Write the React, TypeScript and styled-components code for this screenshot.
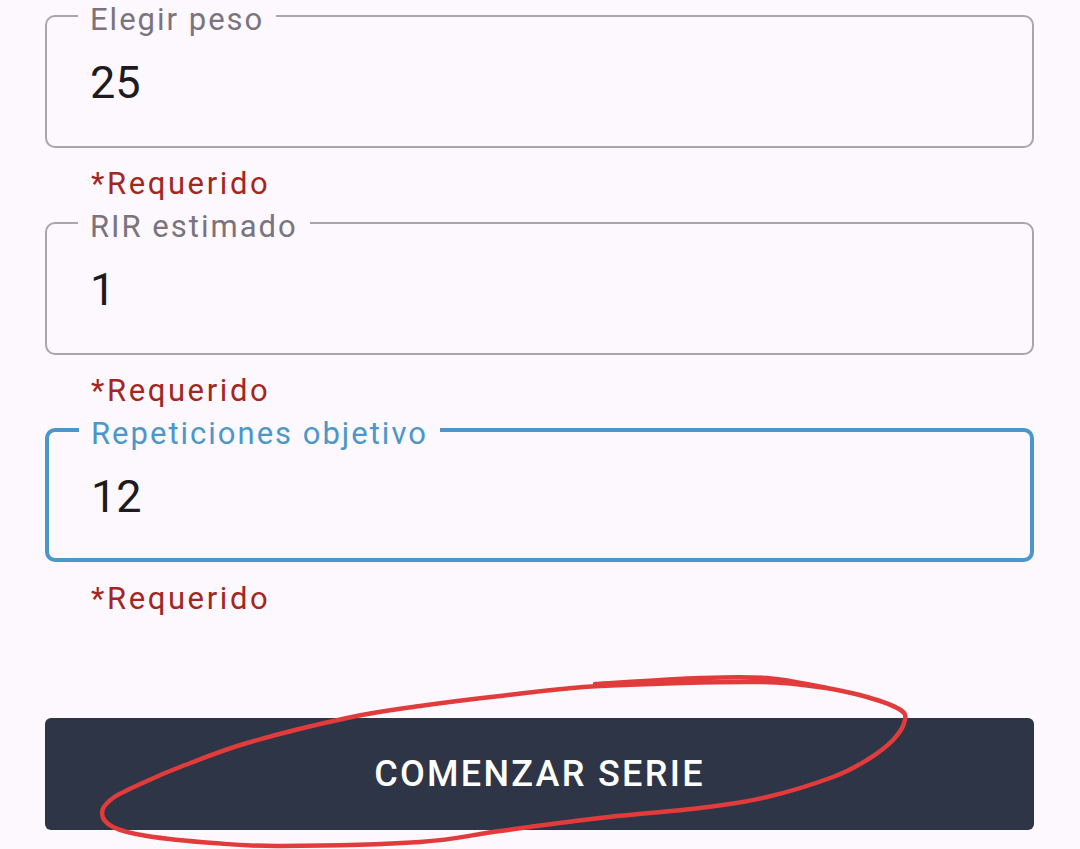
import * as React from 'react'
import styled, { createGlobalStyle } from 'styled-components'

// **************************************************
// ***** Global
// **************************************************
const GlobalStyle = createGlobalStyle`
  html, body {
    margin: 0;
    padding: 0;
    background: #fdf8fd;
  }
  body {
    font-family: Roboto, "Noto Sans", "Liberation Sans", sans-serif;
  }
`

// **************************************************
// ***** Styled Components
// **************************************************
const Page = styled.main`
  position: relative;
  width: 1080px;
  height: 849px;
  overflow: hidden;
  box-sizing: border-box;
  padding: 0 46px 0 45px;
  display: flex;
  flex-direction: column;
`

const FieldGroup = styled.div`
  display: flex;
  flex-direction: column;
  margin-bottom: 5px;
`

const Outline = styled.fieldset<{ $focused?: boolean }>`
  margin: 0;
  min-width: 0;
  padding: 0 0 ${(p) => (p.$focused ? 35 : 36.5)}px ${(p) => (p.$focused ? 30 : 31)}px;
  border: ${(p) => (p.$focused ? '4px solid #4b97cb' : '2.5px solid #a9a5ac')};
  border-radius: 10px;
`

const Label = styled.legend<{ $focused?: boolean }>`
  padding: 6.5px 12px 0;
  font-size: 31px;
  line-height: 25.5px;
  color: ${(p) => (p.$focused ? '#4b97cb' : '#79747e')};
  letter-spacing: 2px;
`

const Value = styled.div`
  padding: 25px 0 0 12px;
  font-size: 45px;
  line-height: 52px;
  color: #1d1b20;
`

const Helper = styled.div`
  margin-top: 18.5px;
  padding-left: 46px;
  font-size: 31px;
  line-height: 36px;
  color: #a3271f;
  letter-spacing: 2.6px;
`

const StartButton = styled.button`
  margin-top: 96px;
  width: 100%;
  height: 112px;
  flex-shrink: 0;
  border: none;
  border-radius: 6px;
  background: #2e3546;
  color: #ffffff;
  font-family: Roboto, "Liberation Sans", sans-serif;
  font-weight: 500;
  font-size: 36px;
  letter-spacing: 2.3px;
  cursor: pointer;
`

const Annotation = styled.svg`
  position: absolute;
  left: 0;
  top: 0;
  pointer-events: none;
`

// **************************************************
// ***** Data
// **************************************************
const fields = [
  { label: 'Elegir peso', value: '25', focused: false },
  { label: 'RIR estimado', value: '1', focused: false },
  { label: 'Repeticiones objetivo', value: '12', focused: true },
]

const ringPoints: [number, number][] = [
  [832, 689], [760, 682], [600, 686], [500, 696], [420, 706], [347, 718],
  [247, 743], [180, 767], [147, 781], [113, 798], [102, 813], [113, 827],
  [147, 836], [213, 843], [280, 846], [420, 842], [500, 831], [600, 818],
  [700, 808], [767, 797], [833, 777], [867, 760], [893, 740], [905, 720],
  [899, 709], [867, 697], [827, 688], [767, 678], [700, 678], [595, 684],
]

// catmull-rom -> cubic bezier
const smoothPath = (pts: [number, number][]) => {
  let d = `M ${pts[0][0]} ${pts[0][1]}`
  for (let i = 0; i < pts.length - 1; i++) {
    const p0 = pts[i - 1] || pts[i]
    const p1 = pts[i]
    const p2 = pts[i + 1]
    const p3 = pts[i + 2] || p2
    const c1x = p1[0] + (p2[0] - p0[0]) / 6
    const c1y = p1[1] + (p2[1] - p0[1]) / 6
    const c2x = p2[0] - (p3[0] - p1[0]) / 6
    const c2y = p2[1] - (p3[1] - p1[1]) / 6
    d += ` C ${c1x} ${c1y} ${c2x} ${c2y} ${p2[0]} ${p2[1]}`
  }
  return d
}

// **************************************************
// ***** Component
// **************************************************
export default function App() {
  return (
    <>
      <GlobalStyle />
      <Page>
        {fields.map((f) => (
          <FieldGroup key={f.label}>
            <Outline $focused={f.focused}>
              <Label $focused={f.focused}>{f.label}</Label>
              <Value>{f.value}</Value>
            </Outline>
            <Helper>*Requerido</Helper>
          </FieldGroup>
        ))}
        <StartButton>COMENZAR SERIE</StartButton>
        <Annotation width={1080} height={849} viewBox="0 0 1080 849">
          <path
            d={smoothPath(ringPoints)}
            fill="none"
            stroke="#e23b3b"
            strokeWidth={4.5}
            strokeLinecap="round"
            strokeLinejoin="round"
          />
        </Annotation>
      </Page>
    </>
  )
}
